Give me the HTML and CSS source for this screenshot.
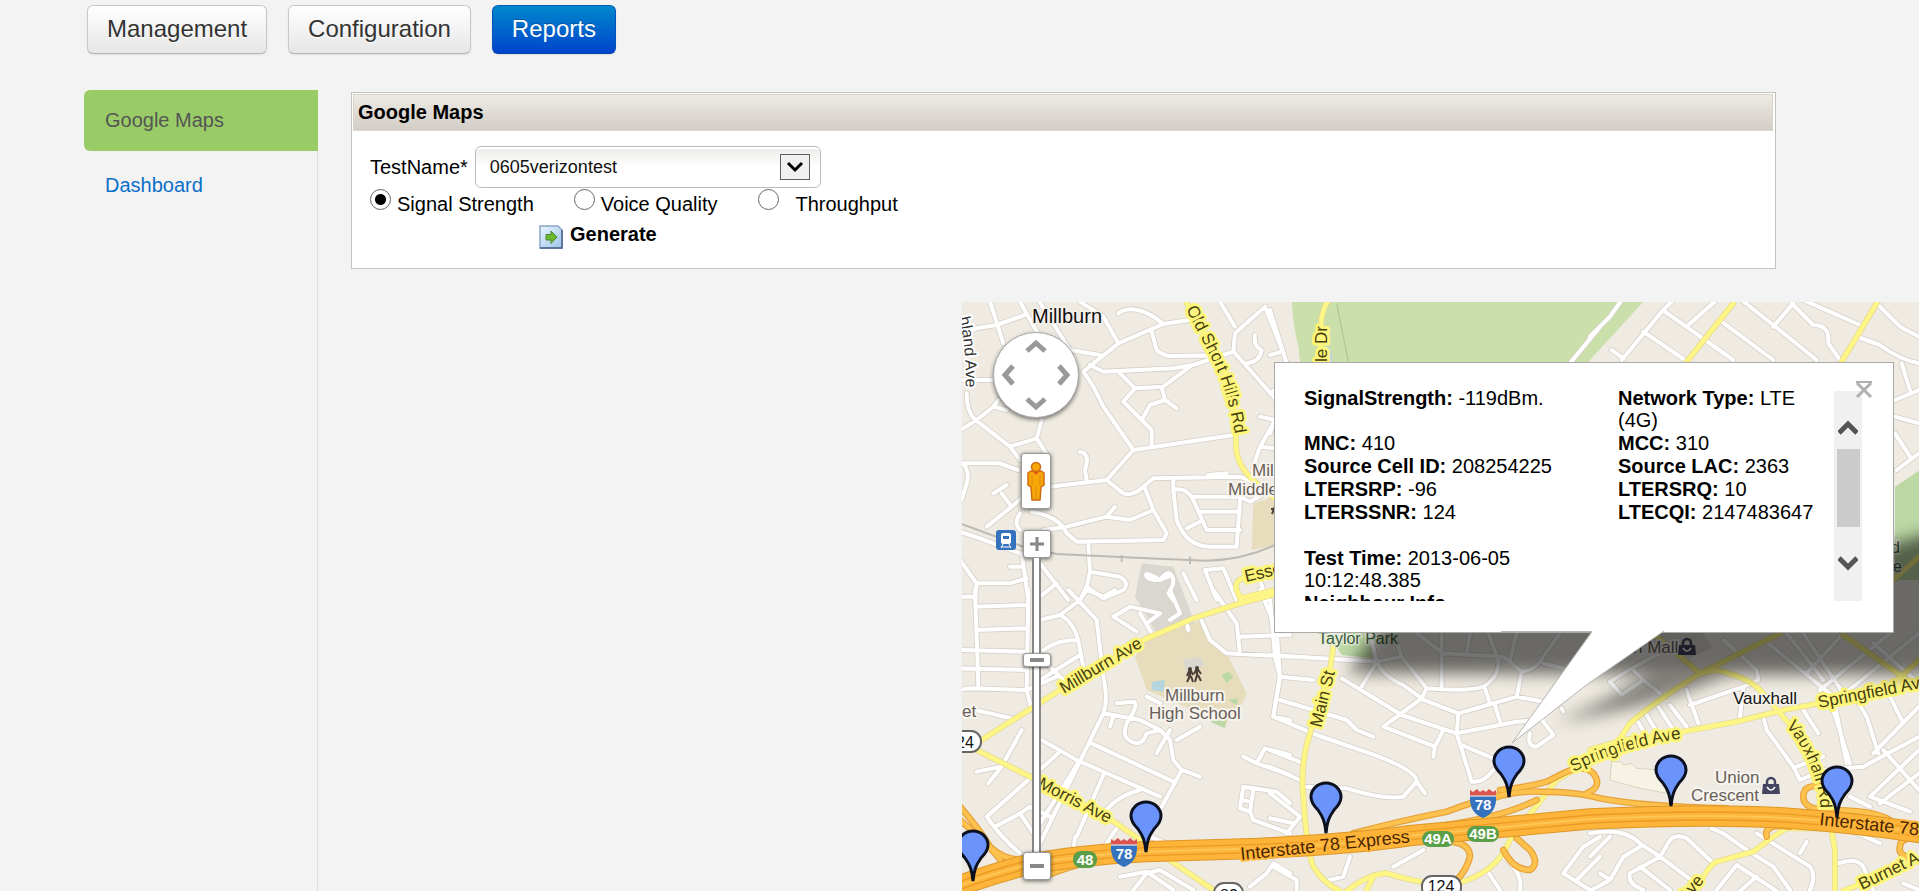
FILE: index.html
```html
<!DOCTYPE html>
<html lang="en">
<head>
<meta charset="utf-8">
<title>Reports - Google Maps</title>
<link rel="stylesheet" href="styles.css">
</head>
<body>
<nav class="topnav">
  <button class="tab" type="button">Management</button>
  <button class="tab" type="button">Configuration</button>
  <button class="tab tab-active" type="button">Reports</button>
</nav>
<div class="layout">
  <aside class="sidebar">
    <a class="side-link side-current" href="#maps">Google Maps</a>
    <a class="side-link" href="#dashboard">Dashboard</a>
  </aside>
  <main class="main">
    <form class="panel">
      <h1 class="panel-title">Google Maps</h1>
      <div class="panel-body">
        <div class="field">
          <label for="test">TestName*</label>
          <div class="select-wrap">
            <select id="test" class="select"><option>0605verizontest</option></select>
            <svg class="select-arrow" viewBox="0 0 30 26" aria-hidden="true"><rect x=".5" y=".5" width="29" height="25" fill="#f0f0f0" stroke="#606060"/><path d="M8 9l7 7 7-7" fill="none" stroke="#000" stroke-width="3"/></svg>
          </div>
        </div>
        <div class="radios">
          <label class="option"><input class="radio" type="radio" name="metric" checked><span>Signal Strength</span></label>
          <label class="option"><input class="radio" type="radio" name="metric"><span>Voice Quality</span></label>
          <label class="option option-wide"><input class="radio" type="radio" name="metric"><span>Throughput</span></label>
        </div>
        <button class="generate" type="button">
          <svg width="24" height="24" viewBox="0 0 24 24" aria-hidden="true">
            <defs><linearGradient id="doc" x2="1" y2="1"><stop offset="0" stop-color="#e8f5fd"/><stop offset="1" stop-color="#9fc4ea"/></linearGradient></defs>
            <path d="M1 1h18l4 4v18H1z" fill="url(#doc)" stroke="#8ba5c8" stroke-width="1.5"/><path d="M23 5v18H1" fill="none" stroke="#48618c" stroke-width="1.5"/>
            <path d="M7 9.500h5V6l6 6-6 6.500V15H7z" fill="#6cb82c" stroke="#4b8a3c"/>
          </svg>
          <span>Generate</span>
        </button>
      </div>
    </form>
    <section class="map" aria-label="Map">
      <svg class="map-art" width="100%" height="100%">
        <defs>
          <filter id="blur" x="-20%" y="-30%" width="140%" height="160%"><feGaussianBlur stdDeviation="8"/></filter>
          <g id="pin"><path d="M0-1C-1-12-3-17-8-24C-13-29-15-32-15-37A15 14 0 0 1 15-37C15-32 13-29 8-24C3-17 1-12 0-1Z"/></g>
          <g id="interstate">
            <path d="M-13-8H13C14 4 8 11 0 14C-8 11-14 4-13-8Z" fill="#3472bd"/>
            <path d="M-13-8V-14L-10-12L-6-15L-3-12L0-14L3-12L6-15L10-12L13-14V-8Z" fill="#d9534f"/>
            <path d="M-13-8H13" stroke="#fff"/>
            <text class="shield-text" y="6">78</text>
          </g>
          <g id="bag"><path d="M-8-2H8L9 8H-9Z" fill="#454560"/><path d="M-4-1V-4A4 4 0 0 1 4-4V-1" fill="none" stroke="#454560" stroke-width="2.500"/><path d="M-4 1Q0 7 4 1" fill="none" stroke="#fff" stroke-width="1.500"/></g>
          <g id="streets">
            <path d="M10 105L50 85L110 75L195 45M90 5L130 130M180 5L250 130M235 0L330 150L420 165M475 40C500 20 550 20 610 72L690 60M610 72L475 130L400 190M360 5L430 50L475 130M575 95L590 150Q610 170 640 168L790 165L820 155L825 100L915 20L970 160M780 5L825 80M820 155L870 210L945 295M885 105Q880 140 905 150Q900 185 860 190M400 190L370 215L400 260L430 320L520 450M390 195L430 215L640 205L700 195L820 155M475 215L525 265L490 305L545 360L575 390L575 435M525 265L610 260L690 200M605 262L615 300L650 325M615 300L570 315L545 360M520 450L820 405M520 450L440 540L270 560M360 455Q385 460 380 490L375 510L380 540M440 540L490 580Q520 590 550 560L580 535L840 530L890 550M555 565L580 630L620 700L610 720M580 630L510 660L440 650L320 680M440 650L465 620M0 490L120 490L175 510M10 490Q30 520 20 550L5 600M0 390Q40 370 100 320L115 300M20 280Q20 350 60 370L150 440L180 480M10 240L100 240M100 320L140 330M150 440L230 415L245 360M230 415L265 470M100 580L140 555M125 580L155 620L80 680M155 620L190 590M180 640Q160 670 180 690M215 635Q300 650 320 700L350 725L610 720M250 690L320 680M640 540L640 570L650 660Q680 740 750 740L830 740L840 600M640 570Q680 560 700 600L740 690L840 690M720 635L840 635M700 590L840 590L870 605L905 585M680 685L720 665M745 525L800 520M900 350L945 360M940 370L900 440L945 445M900 440L880 500M385 735L390 815L380 860L360 900M390 815L480 830Q510 850 490 870L430 895L380 860M240 790L325 900M290 850L240 890M150 800L190 800M185 760L205 900M0 780L50 850L45 900M50 850L150 850L200 835M0 695L60 715L180 760M735 810L790 805L830 900M735 810L770 900M670 820L710 900M900 840L920 900M600 840Q630 800 640 840Q640 860 625 880L640 900M600 840Q550 810 560 830Q575 850 625 830"/>
            <path transform="translate(0 870)" d="M45 0L55 285M0 20L45 20M45 50L200 45M50 120L200 115M0 180L200 185M0 235L200 240M0 300Q20 295 40 295L200 300L290 260M205 0L200 300L215 360M325 0L410 90L430 260Q445 330 430 370L240 760M380 0L360 30L300 75L240 90M300 75Q350 100 360 180L370 230M250 180Q290 150 350 150M240 270L360 195M270 230L310 270M45 360L155 385M185 420L125 530L50 545M125 530L85 580M245 450L350 510L600 620M295 490L80 680M395 460L640 575M430 370L540 390L600 420L630 450L640 510L665 540L720 560M665 540L600 660M430 555L350 740M360 510L240 700M80 680Q120 740 180 790M105 710L180 670L240 760M180 670L210 650L270 680M540 600Q470 620 440 660M480 700L420 790M345 740L340 790M520 650L570 740L620 760M480 860L560 845L640 900M560 850L600 840L700 900M520 900L560 850M850 500L890 520L915 475L990 495M890 520L990 555M850 590L950 605L990 640M850 590L840 655L870 665L880 600M870 665L880 690L990 730M845 630L870 635M460 380L450 410M470 340L520 335Q540 340 500 400Q480 450 530 460Q550 460 560 430L600 420M630 420L590 490M650 450L720 410M560 320L600 340M720 80L750 150L800 190L990 200M760 0L830 100L840 190M840 140L990 135M900 0L950 120L960 260L940 380L990 390M630 0L660 70L630 90M575 130L540 70M530 125L460 80L510 50L600 70L560 100M465 0L430 20L380 0M680 100L685 120M920 850L940 820L990 850M870 890L920 850"/>
            <path transform="translate(930 0)" d="M0 30L50 190M0 165L35 155M990 80L900 190M0 280L14 270M0 400L14 360"/>
            <path transform="translate(1890 0)" d="M95 0L60 50L0 110M250 0L215 35L95 180M380 0L295 75M160 95L285 180M225 35L430 180M65 150L100 175M395 65L550 180M455 0L550 75L680 180M550 80L610 10M605 10L670 75Q720 75 715 130L750 180M640 0L810 75M800 110L870 135Q930 180 987 190M860 10L930 80L987 110M935 190L960 270M915 300L987 270M915 350L987 370M915 400L960 470M920 510L987 460"/>
            <path transform="translate(930 870)" d="M0 30L15 200L30 260L10 380L140 435L300 490Q440 540 440 575L465 610M0 195L320 215M30 260L130 270M30 330L230 390L260 420L310 440M215 265L395 375L560 430L740 395L820 390M300 120L320 215L275 290M320 215Q340 260 400 285L455 325M370 130L395 200L470 295Q600 305 640 290Q690 260 685 210L655 130M320 215L395 200M470 295L455 325L340 410L495 470L520 420M495 470L490 500M450 325L565 370L560 430L605 575Q640 580 670 540M565 370L740 320L820 335M645 295L660 340M675 345L690 395M740 320L755 245L700 200L520 190M515 130L515 290M440 130L520 190M590 190L600 130M740 130L720 210M755 245Q800 240 820 200L870 130M820 220L900 240M575 465L670 505M780 430Q770 470 800 470L850 435L820 395M875 355L880 365M0 480L100 520M0 530L90 570M100 590L230 595Q340 630 400 620L440 575M0 610L90 680L50 730M0 685L70 700M240 800L220 860L180 870M370 830L460 780M10 830L80 870L80 900M650 840L690 900M700 800Q760 850 750 900M880 850L940 770L990 740M880 850L960 900M920 870L990 800"/>
            <path transform="translate(1890 870)" d="M60 275L125 235L160 270L95 315L60 275M160 270L210 310M125 235L210 190M140 390L165 430M170 375L200 425M205 350L250 420M240 345L290 410M290 300L325 400M300 345L460 290L450 380M400 150L500 240L505 270L460 290M535 160L730 320L770 520M590 130L700 270M640 130L760 310M520 380L530 420L610 530L630 570L700 540L820 530L987 440M620 530L700 500M640 360L685 430M730 360L780 520M850 490L987 350M865 490L830 380L800 330M690 300L900 130M740 330L987 130M650 250L760 130M850 160L987 280M900 320L940 400M880 480L987 600M840 620L987 480M840 620L960 665M870 640L987 550M780 620L840 650M0 730Q100 710 150 760L210 800L240 750Q260 730 290 745L370 820M210 800L120 850Q110 880 160 900M150 830L240 900M210 800L330 890M30 850L60 870L0 903M0 800L60 740M60 870L100 800L150 770M365 715L400 730L470 780L550 830L600 900M500 730L660 830Q680 860 660 900M440 825L380 900M440 825L560 903M500 860L450 903M650 755L630 790M745 820Q800 800 820 830L850 903M780 720L870 760M940 880L987 900"/>
          </g>
          <g id="avenues">
            <path d="M680 10L780 180Q830 300 828 440Q830 500 890 550L950 600M945 830L870 830Q820 835 830 870L845 905M840 895L945 870M1105 0Q1080 40 1082 100V190M2320 10L2180 185M2750 10L2645 185"/>
            <path transform="translate(0 870)" d="M65 450L300 300L550 150L700 85L840 40L990 0M50 480L230 570L440 680L570 770L760 900"/>
            <path transform="translate(930 870)" d="M190 170L180 240L120 430Q90 520 100 620Q110 780 130 830Q160 880 210 903M230 903Q300 850 350 850Q480 890 560 880Q680 850 720 750L860 570L930 530L1060 450M290 900L310 860"/>
            <path transform="translate(1890 870)" d="M90 445L120 400Q200 330 330 250L570 130M0 480L100 450L280 425L440 395L580 360L660 345L987 280M200 140L330 250L380 240Q470 260 510 300L570 370Q700 510 710 640L735 780V903M760 135L945 265L987 290M320 903Q350 830 380 815L490 785Q560 730 590 715L700 715M760 903L987 810M915 275L987 210M910 -30L987 -100"/>
          </g>
          <g id="ramps">
            <path transform="translate(0 870)" d="M0 650Q60 720 90 770Q130 810 190 810L280 800M0 690Q70 750 105 790Q150 840 120 860M250 860Q400 800 540 790"/>
            <path transform="translate(930 870)" d="M250 730Q400 690 530 665Q650 620 720 610M530 705Q700 680 800 630M690 600Q780 590 830 575L880 550Q940 520 970 550Q1000 590 950 610M700 780Q730 840 780 840Q810 820 780 780L740 745M540 755Q600 760 600 800Q590 840 560 870"/>
            <path transform="translate(1890 870)" d="M700 590Q640 580 640 620Q640 660 720 660Q850 660 900 690M600 710Q520 700 530 740M987 745Q930 740 930 770Q920 800 987 810"/>
            <path d="M1560 1510Q1650 1470 1740 1475Q1850 1475 1920 1495Q2050 1520 2300 1525"/>
          </g>
          <path id="freeway" d="M-10 1760Q100 1720 200 1695Q350 1665 560 1655L900 1645Q1200 1630 1350 1607Q1650 1580 1890 1557Q2250 1540 2490 1555Q2700 1570 2880 1598"/>
          <path id="oldshort" d="M1186 309L1214 363Q1229 395 1236 440"/>
          <path id="springfield" d="M1574 772Q1615 749 1684 738"/>
          <path id="hland" d="M959 318Q968 352 965 400"/>
          <path id="vauxrd" d="M1786 726Q1812 756 1820 800L1822 850"/>
        </defs>
        <g transform="translate(-962 -302)">
          <g transform="translate(960 300) scale(.33333)">
            <path class="park" d="M995 0H2055L1890 180L1830 260H1030L1015 140Q1000 80 995 0Z"/>
            <path class="park park-dark" d="M2805 560L2880 510V840H2805ZM1130 1040L1170 970H1250L1240 1075L1145 1065Z"/>
            <path class="park-edge" d="M1130 10L1165 185"/>
            <path class="water" d="M1100 135Q1120 150 1115 190H1095Z"/>
            <path class="school" d="M525 1070L555 1020L725 960L745 1020L800 1060L860 1180L850 1205L790 1280L720 1240L560 1170ZM880 610L945 590V735L875 750Z"/>
            <path class="lot" d="M545 790L640 800L705 970L590 1000L525 890ZM670 1080L720 1070L735 1095L680 1120ZM1920 980L2220 990L2260 1040L2180 1080Z"/>
            <path class="water" d="M575 1145L615 1140L610 1175L575 1170Z"/>
            <path class="park park-dark" d="M785 1125L805 1115L820 1130L800 1150ZM805 1200L835 1195L830 1215ZM750 1265L800 1250L795 1285Z"/>
            <path class="store" d="M1955 1385L1985 1385L1990 1395L2015 1390L2030 1405L2105 1410L2120 1480L2040 1465L1950 1440Z"/>
            <use href="#streets" class="street-edge"/>
            <use href="#streets" class="street"/>
            <path class="rail" d="M0 670L190 740L290 762L560 775L740 782Q850 780 945 735M485 765V785M690 770V792"/>
            <use href="#avenues" class="avenue-edge"/>
            <use href="#avenues" class="avenue"/>
            <use href="#ramps" class="ramp-edge"/>
            <use href="#ramps" class="ramp"/>
            <use href="#freeway" class="freeway-edge"/>
            <use href="#freeway" class="freeway"/>
            <use href="#freeway" class="lane" transform="translate(0 -12)"/>
            <use href="#freeway" class="lane" transform="translate(0 12)"/>
            <use href="#freeway" class="lane-light"/>
          </g>
          <g class="road-label">
            <text><textPath href="#oldshort">Old Short Hills Rd</textPath></text>
            <text transform="translate(1327 362) rotate(-90)">le Dr</text>
            <text transform="translate(1246 582) rotate(-13)">Esse</text>
            <text transform="translate(1064 694) rotate(-31)">Millburn Ave</text>
            <text transform="translate(1037 787) rotate(27)">Morris Ave</text>
            <text transform="translate(1321 728) rotate(-76)">Main St</text>
            <text><textPath href="#springfield">Springfield Ave</textPath></text>
            <text transform="translate(1819 708) rotate(-11)">Springfield Av</text>
            <text><textPath href="#vauxrd">Vauxhall Rd</textPath></text>
            <text transform="translate(1862 890) rotate(-26)">Burnet A</text>
            <text transform="translate(1686 903) rotate(-50)">Ave</text>
          </g>
          <g class="freeway-label">
            <text transform="translate(1241 860) rotate(-6)">Interstate 78 Express</text>
            <text transform="translate(1819 825) rotate(6)">Interstate 78</text>
          </g>
          <g class="street-label"><text><textPath href="#hland">hland Ave</textPath></text></g>
          <text class="town" x="1032" y="323">Millburn</text>
          <text class="suburb" x="1733" y="704">Vauxhall</text>
          <g class="place">
            <text x="1252" y="476">Mill</text><text x="1228" y="495">Middle</text>
            <text x="1165" y="701">Millburn</text><text x="1149" y="719">High School</text>
            <text x="962" y="717">et</text>
            <text x="1715" y="783">Union</text><text x="1691" y="801">Crescent</text>
            <text x="1633" y="653">n Mall</text>
          </g>
          <g class="park-label"><text x="1318" y="644">Taylor Park</text><text x="1891" y="553">d</text><text x="1893" y="572">e</text></g>
          <g class="people"><path d="M1190 669l-3 7M1190 669l3 6M1190 669v7l-3 6M1191 676l2 6M1197 668l-3 6M1197 668l4 6M1197 668v7l-2 7M1198 675l3 6M1272 514l3-8M1271 509h5"/><circle cx="1190" cy="669" r="1"/><circle cx="1197" cy="668" r="1"/></g>
          <use href="#bag" x="1687" y="647"/><use href="#bag" x="1771" y="786"/>
          <g class="route">
            <rect x="948" y="731" width="33" height="21" rx="10"/><text x="965" y="748">24</text>
            <rect x="1214" y="883" width="29" height="22" rx="10"/><text x="1229" y="901">82</text>
            <rect x="1422" y="876" width="39" height="22" rx="10"/><text x="1441" y="892">124</text>
          </g>
          <g class="exit">
            <rect x="1073" y="851" width="24" height="17" rx="8"/><text x="1085" y="865">48</text>
            <rect x="1422" y="831" width="32" height="16" rx="8"/><text x="1438" y="844">49A</text>
            <rect x="1467" y="826" width="32" height="16" rx="8"/><text x="1483" y="839">49B</text>
          </g>
          <use href="#interstate" x="1124" y="853"/><use href="#interstate" x="1483" y="804"/>
          <g><rect x="996" y="530" width="20" height="20" rx="3" fill="#3472bd"/><rect x="1001" y="533" width="10" height="11" rx="2" fill="#fff"/><path d="M1003 536h6v3h-6z" fill="#3472bd"/><path d="M1002 547h8M1003 544l-2 4M1009 544l2 4" stroke="#fff"/></g>
          <g class="shadow" filter="url(#blur)"><path d="M1348 673L1430 550H1870L1940 530H2040L2000 675Z"/></g>
          <g class="shadow shadow-tail" filter="url(#blur)"><path d="M1650 672L1730 672Q1670 705 1556 722Q1610 700 1650 672Z"/></g>
          <g class="pins"><use href="#pin" x="973" y="882"/><use href="#pin" x="1146" y="853"/><use href="#pin" x="1326" y="834"/><use href="#pin" x="1509" y="798"/><use href="#pin" x="1671" y="807"/><use href="#pin" x="1837" y="818"/></g>
        </g>
      </svg>

      <div class="pan" role="group" aria-label="Pan">
        <button class="pan-btn pan-up" type="button" aria-label="Pan up"><svg viewBox="0 0 22 14"><path d="M2 12l9-8 9 8"/></svg></button>
        <button class="pan-btn pan-left" type="button" aria-label="Pan left"><svg viewBox="0 0 14 22"><path d="M12 2L4 11l8 9"/></svg></button>
        <button class="pan-btn pan-right" type="button" aria-label="Pan right"><svg viewBox="0 0 14 22"><path d="M2 2l8 9-8 9"/></svg></button>
        <button class="pan-btn pan-down" type="button" aria-label="Pan down"><svg viewBox="0 0 22 14"><path d="M2 2l9 8 9-8"/></svg></button>
      </div>
      <button class="map-btn pegman" type="button" aria-label="Street View"><svg width="18" height="40" viewBox="0 0 18 40"><path d="M4 10h10l3 2v12l-3 2-1 13H5L4 26l-3-2V12z" fill="#f7a708" stroke="#d06a10" stroke-width="1.500"/><path d="M5 24V14M13 24V14M9 26v12" stroke="#d98a10"/><circle cx="9" cy="6" r="4.500" fill="#f7a708" stroke="#d06a10" stroke-width="1.500"/><path d="M6 11l3 3 3-3z" fill="#e05a10"/></svg></button>
      <div class="zoom">
        <button class="map-btn zoom-btn" type="button" aria-label="Zoom in"><svg width="14" height="14"><path d="M7 0v14M0 7h14" stroke="#888" stroke-width="3"/></svg></button>
        <input class="zoom-range" type="range" min="0" max="100" value="66" aria-label="Zoom level">
        <button class="map-btn zoom-btn" type="button" aria-label="Zoom out"><svg width="14" height="14"><path d="M0 7h14" stroke="#888" stroke-width="4"/></svg></button>
      </div>

      <div class="info">
        <div class="info-view">
          <table class="info-table">
            <tr><td><b>SignalStrength:</b> -119dBm.</td><td><b>Network Type:</b> LTE (4G)</td></tr>
            <tr><td><b>MNC:</b> 410</td><td><b>MCC:</b> 310</td></tr>
            <tr><td><b>Source Cell ID:</b> 208254225</td><td><b>Source LAC:</b> 2363</td></tr>
            <tr><td><b>LTERSRP:</b> -96</td><td><b>LTERSRQ:</b> 10</td></tr>
            <tr><td><b>LTERSSNR:</b> 124</td><td><b>LTECQI:</b> 2147483647</td></tr>
            <tr><td>&nbsp;</td><td></td></tr>
            <tr><td><b>Test Time:</b> 2013-06-05 10:12:48.385</td><td></td></tr>
            <tr><td><b>Neighbour Info</b></td><td></td></tr>
          </table>
        </div>
        <div class="scrollbar">
          <svg width="20" height="16" viewBox="0 0 20 16"><path d="M1 14l9-9 9 9"/></svg>
          <div class="thumb"></div>
          <svg width="20" height="16" viewBox="0 0 20 16"><path d="M1 2l9 9 9-9"/></svg>
        </div>
        <button class="close" type="button" aria-label="Close"><svg width="18" height="18"><path d="M1 1h16" stroke="#b0b0b0" stroke-width="2"/><path d="M2 2l14 14M16 2L2 16" fill="none" stroke="#b0b0b0" stroke-width="3"/></svg></button>
        <svg class="tail" width="164" height="114" viewBox="0 0 164 114"><path d="M91 2L11 113L88 53L163 1V0H91Z" fill="#fff"/><path d="M0 1.500H91L11 113L88 53L163 1" fill="none" stroke="#b4b4b4"/></svg>
      </div>
    </section>
  </main>
</div>
</body>
</html>
```

FILE: styles.css
```css
* { box-sizing: border-box; }

body {
  margin: 0;
  min-height: 100vh;
  display: flex;
  flex-direction: column;
  background: #f3f3f3;
  color: #000;
  font-family: "Liberation Sans", Arial, sans-serif;
  font-size: 20px;
}

button { font: inherit; color: inherit; cursor: pointer; }

/* top tabs */
.topnav { display: flex; gap: 21px; padding: 5px 0 0 87px; }
.tab {
  height: 49px;
  padding: 0 19px 2px;
  border: 1px solid #c8c8c8;
  border-bottom-color: #b3b3b3;
  border-radius: 6px;
  background: linear-gradient(#fff, #e6e6e6);
  box-shadow: 0 1px 2px rgba(0, 0, 0, .08);
  color: #333;
  font-size: 24px;
  text-shadow: 0 1px 1px #fff;
}
.tab-active {
  border-color: #0360b0 #0353bb #0340b0;
  background: linear-gradient(#0088cc, #0044cc);
  color: #fff;
  text-shadow: 0 -1px 0 rgba(0, 0, 0, .25);
}

/* page columns */
.layout { flex: 1; display: flex; padding: 36px 0 0 84px; }
.sidebar {
  width: 234px;
  flex: none;
  display: flex;
  flex-direction: column;
  gap: 4px;
  border-right: 1px solid #ddd;
}
.side-link {
  padding: 0 21px;
  line-height: 61px;
  color: #0b6fc9;
  text-decoration: none;
}
.side-current {
  margin-right: -1px;
  border-radius: 6px 0 0 6px;
  background: #99cc66;
  color: #555;
}
.main {
  flex: 1;
  min-width: 0;
  display: flex;
  flex-direction: column;
  gap: 33px;
  padding: 2px 0 0 33px;
}

/* report form */
.panel {
  margin-right: 143px;
  padding: 1px;
  border: 1px solid #c3c3bf;
  background: #fff;
}
.panel-title {
  margin: 0 1px 0 0;
  padding: 0 4px;
  border: 1px solid #d9d3c8;
  border-bottom-color: #dcd9d3;
  background: linear-gradient(#eeebe5, #d2cdc5);
  font-size: 20px;
  line-height: 35px;
}
.panel-body { padding: 15px 17px 18px; }
.field { display: flex; align-items: center; gap: 7px; line-height: 38px; }
.select-wrap { display: grid; align-items: center; width: 346px; }
.select {
  grid-area: 1 / 1;
  height: 42px;
  padding: 0 14px;
  border: 1px solid #bbb;
  border-radius: 6px;
  appearance: none;
  background: linear-gradient(#edebe7, #fff 50%);
  box-shadow: inset 0 2px 0 #fff;
  color: #111;
  font: inherit;
  font-size: 18px;
}
.select-arrow {
  grid-area: 1 / 1;
  justify-self: end;
  width: 30px;
  height: 26px;
  margin-right: 11px;
  pointer-events: none;
}
.radios { display: flex; gap: 40px; margin-top: 1px; line-height: 30px; }
.option { display: flex; gap: 6px; }
.option-wide { gap: 17px; }
.radio {
  width: 21px;
  height: 21px;
  flex: none;
  margin: 0;
  appearance: none;
  border: 1px solid #666;
  border-radius: 50%;
  background: #fff;
}
.radio:checked { background: radial-gradient(circle, #000 5px, #fff 6px); }
.generate {
  display: flex;
  align-items: flex-end;
  gap: 7px;
  height: 30px;
  margin-left: 169px;
  padding: 0;
  border: 0;
  background: none;
  font-weight: bold;
  line-height: 30px;
}

/* map */
.map {
  position: relative;
  flex: 1;
  min-height: 400px;
  margin-left: 611px;
  overflow: hidden;
  background: #efebe2;
}
.map-art { position: absolute; inset: 0; display: block; }
.park { fill: #cbdfaa; }
.park-dark { fill: #bcd8a5; }
.park-edge { fill: none; stroke: #b4c79a; stroke-width: 4; }
.water { fill: #b5d5dc; }
.school { fill: #e7dcbc; }
.lot { fill: #dad7d1; }
.store { fill: #f7f3e4; stroke: #d8d3c0; stroke-width: 3; }
.rail { fill: none; stroke: #bdbab5; stroke-width: 6; }
.street, .street-edge, .avenue, .avenue-edge, .ramp, .ramp-edge,
.freeway, .freeway-edge, .lane, .lane-light {
  fill: none;
  stroke-linecap: round;
  stroke-linejoin: round;
}
.street-edge { stroke: #d6d1c8; stroke-width: 17; }
.street { stroke: #fff; stroke-width: 12; }
.avenue-edge { stroke: #e3d795; stroke-width: 18; }
.avenue { stroke: #fdf585; stroke-width: 14; }
.ramp-edge { stroke: #e6a13a; stroke-width: 20; }
.ramp { stroke: #fdc14e; stroke-width: 13; }
.freeway-edge { stroke: #dd9728; stroke-width: 64; }
.freeway { stroke: #fdb438; stroke-width: 58; }
.lane { stroke: #e99b27; stroke-width: 4; }
.lane-light { stroke: #fdc657; stroke-width: 6; }

.map-art text { paint-order: stroke; stroke-linejoin: round; }
.road-label { font-size: 17px; fill: #46400f; stroke: #fdf57a; stroke-width: 6px; }
.freeway-label { font-size: 18px; fill: #4a2500; stroke: #fdb438; stroke-width: 4px; }
.street-label { font-size: 16px; fill: #333; stroke: #fff; stroke-width: 4px; }
.town { font-size: 20px; fill: #111; stroke: #f5f2ec; stroke-width: 3px; }
.suburb { font-size: 17px; fill: #111; stroke: #f5f2ec; stroke-width: 3px; }
.place { font-size: 17px; fill: #696058; stroke: #f7f4ef; stroke-width: 4px; }
.park-label { font-size: 16px; fill: #3c5a3c; stroke: #e4ecd6; stroke-width: 3px; }
.people { fill: #4b4038; stroke: #4b4038; stroke-width: 2; }
.route rect { fill: #fff; stroke: #666; stroke-width: 2; }
.route text { font-size: 16px; text-anchor: middle; fill: #111; }
.exit rect { fill: #5a9e48; }
.exit text, .shield-text {
  font-size: 15px;
  font-weight: bold;
  text-anchor: middle;
  fill: #fff;
}
.shadow { fill: #000; opacity: .55; }
.shadow-tail { opacity: .45; }
.pins { fill: #6a94fb; stroke: #0b1020; stroke-width: 3; }

/* map controls */
.pan {
  position: absolute;
  left: 31px;
  top: 30px;
  width: 86px;
  height: 86px;
  border: 1px solid #aaa;
  border-radius: 50%;
  background: #fff;
  box-shadow: 0 2px 4px rgba(0, 0, 0, .5);
}
.pan-btn { position: absolute; display: block; padding: 0; border: 0; background: none; }
.pan-btn svg { display: block; width: 100%; fill: none; stroke: #999; stroke-width: 5; }
.pan-up, .pan-down { left: 31px; width: 22px; }
.pan-left, .pan-right { top: 31px; width: 14px; }
.pan-up { top: 6px; }
.pan-down { bottom: 6px; }
.pan-left { left: 7px; }
.pan-right { right: 7px; }
.map-btn {
  display: grid;
  place-items: center;
  padding: 0;
  border: 1px solid #999;
  border-radius: 3px;
  background: #fff;
  box-shadow: 0 1px 4px rgba(0, 0, 0, .6);
}
.pegman { position: absolute; left: 59px; top: 151px; width: 30px; height: 56px; }
.zoom {
  position: absolute;
  left: 61px;
  top: 228px;
  display: flex;
  flex-direction: column;
  align-items: center;
}
.zoom-btn { width: 28px; height: 28px; }
.zoom-range {
  width: 28px;
  height: 294px;
  margin: 0;
  appearance: none;
  writing-mode: vertical-lr;
  direction: rtl;
  background: linear-gradient(90deg, transparent 9px, #888 9px 11px, #fff 11px 16px, #888 16px 18px, transparent 18px);
}
.zoom-range::-webkit-slider-thumb {
  appearance: none;
  width: 28px;
  height: 14px;
  border: 1px solid #999;
  border-radius: 3px;
  background: linear-gradient(#888, #888) center / 14px 4px no-repeat #fff;
  box-shadow: 0 1px 3px rgba(0, 0, 0, .6);
}

/* info window */
.info {
  position: absolute;
  left: 312px;
  top: 60px;
  width: 620px;
  height: 271px;
  padding: 23px 31px 31px 29px;
  display: flex;
  border: 1px solid #a9a9a9;
  background: #fff;
}
.info-view { flex: 1; overflow: hidden; line-height: 22px; }
.info-table { width: 100%; border-spacing: 0 1px; table-layout: fixed; }
.info-table td { padding: 0; vertical-align: top; }
.info-table td:first-child { width: 314px; padding-right: 8px; }
.scrollbar {
  width: 28px;
  margin-top: 5px;
  padding: 28px 0 26px;
  display: flex;
  flex-direction: column;
  align-items: center;
  background: #f0f0f0;
}
.scrollbar svg { fill: none; stroke: #555; stroke-width: 5; }
.thumb { width: 23px; height: 78px; margin: 14px 0 29px; background: #cbcbcb; }
.close {
  position: absolute;
  right: 20px;
  top: 18px;
  padding: 0;
  border: 0;
  background: none;
  line-height: 0;
}
.tail { position: absolute; left: 226px; top: 267px; }
```
